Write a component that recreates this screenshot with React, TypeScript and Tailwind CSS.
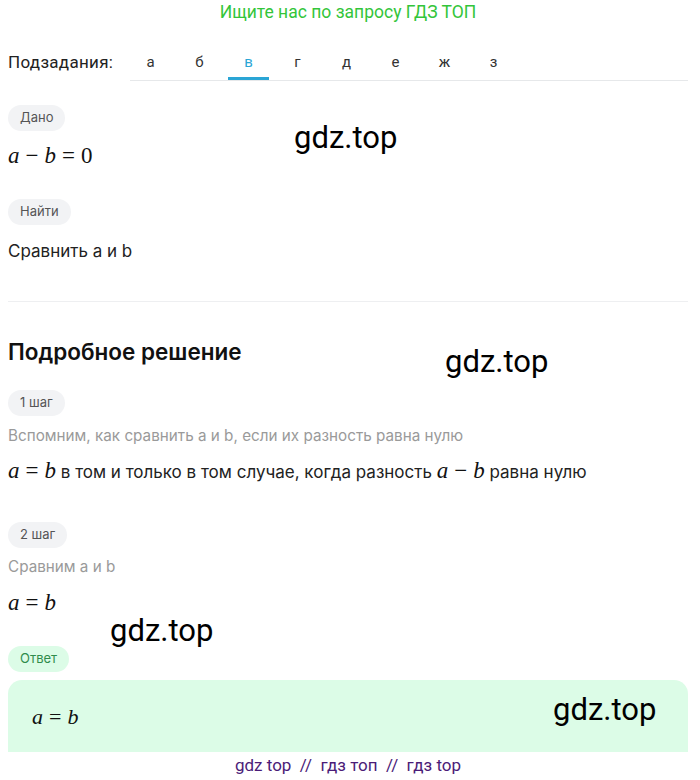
import React from 'react';

const tabs = ['а', 'б', 'в', 'г', 'д', 'е', 'ж', 'з'];

const ui = { fontFamily: 'Roboto, "Noto Sans", sans-serif' };
const body = { fontFamily: 'Inter, Roboto, sans-serif' };
const serif = { fontFamily: '"Liberation Serif", "DejaVu Serif", serif' };

function Pill({ children, green }: { children: React.ReactNode; green?: boolean }) {
  return (
    <div
      style={body}
      className={
        'inline-flex h-[26px] items-center rounded-full px-3 text-[13px] ' +
        (green ? 'bg-[#dcfce7] text-[#2f8c4c]' : 'bg-[#f2f3f5] text-[#555]')
      }
    >
      {children}
    </div>
  );
}

function Op({ children }: { children: React.ReactNode }) {
  return <span className="px-[6px]">{children}</span>;
}

function M({ children, size = 'text-[23px]' }: { children: React.ReactNode; size?: string }) {
  return (
    <span style={serif} className={size + ' text-[#111]'}>
      {children}
    </span>
  );
}

function Mark({ className }: { className: string }) {
  return (
    <div className={'pointer-events-none absolute text-[31px] leading-none text-black ' + className}>
      gdz.top
    </div>
  );
}

export default function App() {
  return (
    <div style={ui} className="relative h-[780px] w-[700px] overflow-hidden bg-white pl-2 pr-3 text-[#1f1f1f]">
      <div className="h-6 text-center text-[17.5px] leading-6 text-[#33c53a]">Ищите нас по запросу ГДЗ ТОП</div>

      <div className="mt-5 flex h-[37px] items-start">
        <div className="w-[122px] pt-[7px] text-[17px] leading-[22px] tracking-[0.3px] text-[#222]">Подзадания:</div>
        <div className="flex h-[37px] flex-1 gap-2 border-b border-[#e6e8ea]">
          {tabs.map((t) => (
            <div
              key={t}
              className={
                'flex h-[36px] w-[41px] items-center justify-center text-[15px] ' +
                (t === 'в' ? 'border-b-[3px] border-[#2aa5d5] pt-[3px] text-[#2aa5d5]' : 'text-[#333]')
              }
            >
              {t}
            </div>
          ))}
        </div>
      </div>

      <div className="mt-6 h-[25px]">
        <Pill>Дано</Pill>
      </div>
      <div className="mt-3 h-7 leading-7">
        <M>
          <i>a</i>
          <Op>−</Op>
          <i>b</i>
          <Op>=</Op>0
        </M>
      </div>

      <div className="mt-[29px] h-[26px]">
        <Pill>Найти</Pill>
      </div>
      <div style={body} className="mt-[14px] h-6 text-[17px] leading-6 text-[#222]">
        Сравнить а и b
      </div>

      <div className="mt-[38px] border-t border-[#eeeff1]" />

      <div style={body} className="mt-9 h-7 text-[22.5px] font-semibold leading-7 text-[#111]">
        Подробное решение
      </div>

      <div className="mt-6 h-[26px]">
        <Pill>1 шаг</Pill>
      </div>
      <div style={body} className="mt-[9px] h-[22px] text-[15.25px] leading-[22px] text-[#9a9a9a]">
        Вспомним, как сравнить a и b, если их разность равна нулю
      </div>
      <div style={body} className="mt-[10px] h-7 text-[17px] leading-7 text-[#222]">
        <M>
          <i>a</i>
          <Op>=</Op>
          <i>b</i>
        </M>{' '}
        в том и только в том случае, когда разность{' '}
        <M>
          <i>a</i>
          <Op>−</Op>
          <i>b</i>
        </M>{' '}
        равна нулю
      </div>

      <div className="mt-[37px] h-[26px]">
        <Pill>2 шаг</Pill>
      </div>
      <div style={body} className="mt-2 h-[22px] text-[15.25px] leading-[22px] text-[#9a9a9a]">
        Сравним a и b
      </div>
      <div className="mt-[11px] h-7 leading-7">
        <M>
          <i>a</i>
          <Op>=</Op>
          <i>b</i>
        </M>
      </div>

      <div className="mt-[29px] h-[25px]">
        <Pill green>Ответ</Pill>
      </div>
      <div className="mt-[9px] flex h-[72px] items-center rounded-t-[14px] bg-[#dcfce7] px-6">
        <M size="text-[22px]">
          <i>a</i>
          <Op>=</Op>
          <i>b</i>
        </M>
      </div>

      <div className="mt-px h-6 text-center text-[17px] leading-6 text-[#4b1c78]">
        gdz top&nbsp; //&nbsp; гдз топ&nbsp; //&nbsp; гдз top
      </div>

      <Mark className="left-[294px] top-[122px]" />
      <Mark className="left-[445px] top-[346px]" />
      <Mark className="left-[110px] top-[615px]" />
      <Mark className="left-[553px] top-[694px]" />
    </div>
  );
}
